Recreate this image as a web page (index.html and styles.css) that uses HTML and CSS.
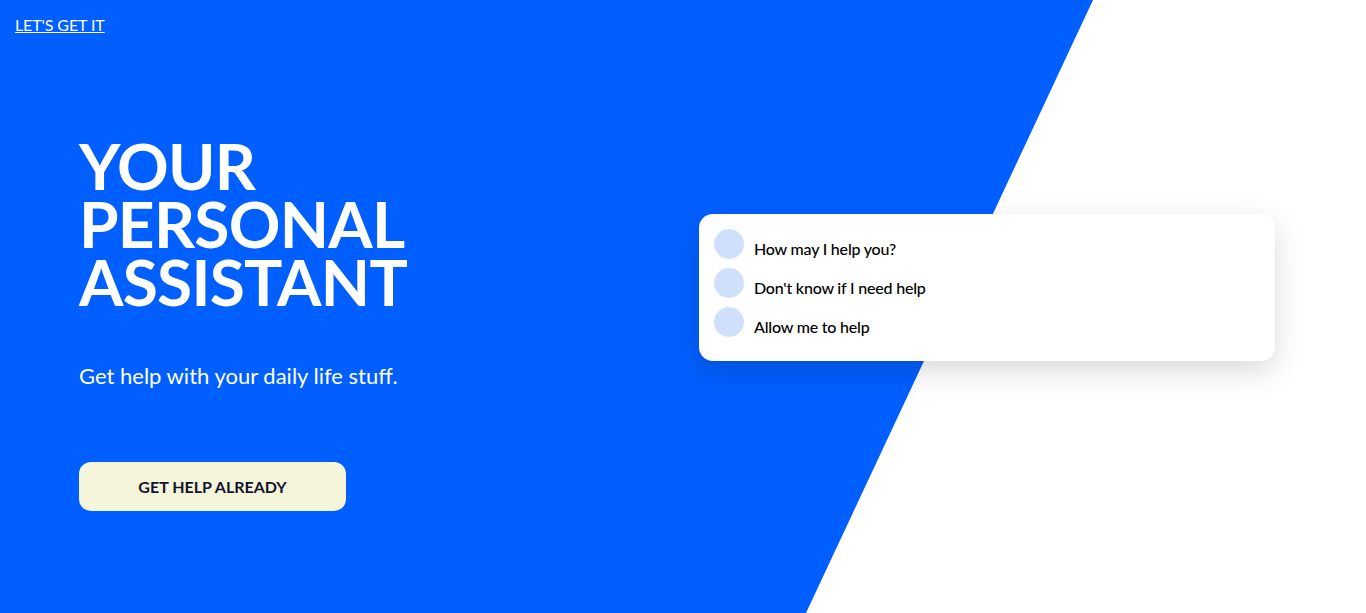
FILE: index.html
```html
<!DOCTYPE html>
<html lang="en">

<head>
    <meta charset="UTF-8">
    <meta name="viewport" content="width=device-width, initial-scale=1.0">
    <title>Your Personal Assistant</title>
    <link rel="stylesheet" href="styles.css">
</head>

<body>
    <div class="page">
        <header class="top">
            <a href="#" class="top-link">LET'S GET IT</a>
        </header>
        <main class="hero">
            <section class="intro">
                <h1>YOUR<br>PERSONAL<br>ASSISTANT</h1>
                <p class="lead">Get help with your daily life stuff.</p>
                <button class="cta">GET HELP ALREADY</button>
            </section>
            <section class="chat">
                <div class="chat-row">
                    <span class="avatar"></span>
                    <span class="msg">How may I help you?</span>
                </div>
                <div class="chat-row">
                    <span class="avatar"></span>
                    <span class="msg">Don't know if I need help</span>
                </div>
                <div class="chat-row">
                    <span class="avatar"></span>
                    <span class="msg">Allow me to help</span>
                </div>
            </section>
        </main>
    </div>
</body>

</html>
```

FILE: styles.css
```css
body {
    font-family: Lato, "Open Sans", sans-serif;
    background-color: white;
    margin: 0;
    padding: 0;
}

.page {
    position: relative;
    height: 613px;
    overflow: hidden;
}

/* blue slanted backdrop */
.page::before {
    content: "";
    position: absolute;
    inset: 0;
    background-color: #005ffe;
    clip-path: polygon(0 0, 1093px 0, 806px 100%, 0 100%);
}

.top,
.hero {
    position: relative;
}

.top {
    padding: 15px 15px 0;
    height: 23px;
}

.top-link {
    color: white;
    font-size: 16px;
    letter-spacing: -0.1px;
    text-decoration: underline;
}

.hero {
    display: flex;
    justify-content: space-between;
    align-items: flex-start;
    padding: 0 91px 0 79px;
}

.intro {
    padding-top: 99px;
}

h1 {
    margin: 0;
    color: white;
    font-size: 64px;
    font-weight: 700;
    line-height: 58px;
    letter-spacing: -0.75px;
}

.lead {
    margin: 51px 0 0;
    color: white;
    font-size: 22px;
}

.cta {
    margin-top: 73px;
    width: 267px;
    height: 49px;
    border: none;
    border-radius: 12px;
    background-color: #f5f5dc;
    color: #14142b;
    font-family: inherit;
    font-size: 16px;
    font-weight: 700;
    cursor: pointer;
}

.chat {
    margin-top: 176px;
    width: 576px;
    box-sizing: border-box;
    padding: 15px 15px 24px;
    background-color: white;
    border-radius: 14px;
    box-shadow: 0 10px 30px rgba(0, 0, 0, 0.15);
    display: flex;
    flex-direction: column;
    gap: 9px;
}

.chat-row {
    display: flex;
    align-items: flex-end;
    gap: 10px;
}

.avatar {
    width: 30px;
    height: 30px;
    border-radius: 50%;
    background-color: #cfe0fd;
    flex-shrink: 0;
}

.msg {
    font-size: 16px;
    font-weight: 500;
    color: black;
    line-height: 20px;
    letter-spacing: -0.2px;
}
```
